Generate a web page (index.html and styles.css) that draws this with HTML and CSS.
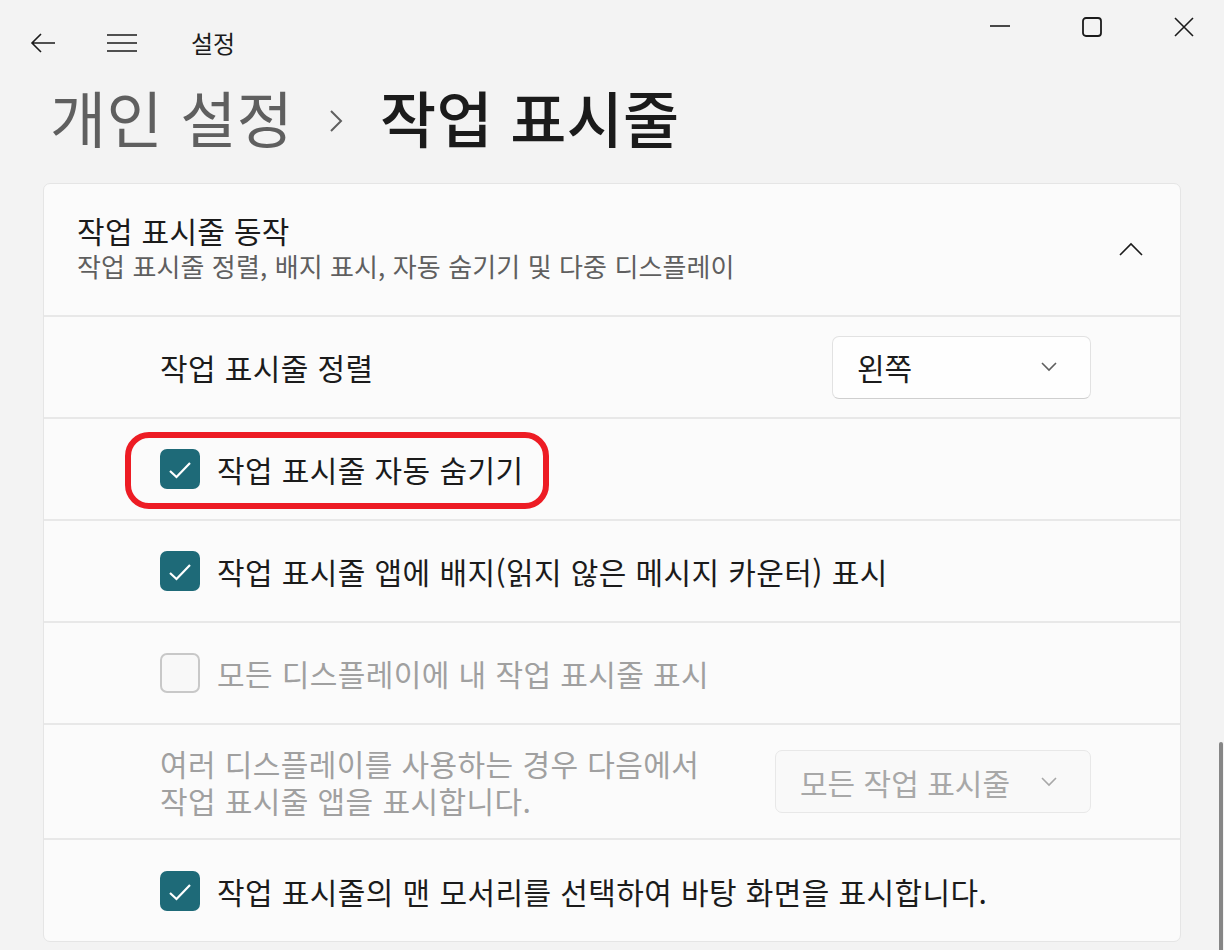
FILE: index.html
```html
<!DOCTYPE html>
<html lang="ko">
<head>
<meta charset="utf-8">
<link rel="stylesheet" href="styles.css">
</head>
<body>
<div class="window">
  <header class="titlebar">
    <div class="tb-left">
      <svg class="ico-back" width="26" height="20" viewBox="0 0 26 20"><path d="M11 1 L2 10 L11 19 M2 10 H25" fill="none" stroke="#1b1b1b" stroke-width="1.6"/></svg>
      <svg class="ico-menu" width="30" height="20" viewBox="0 0 30 20"><path d="M0 2 H30 M0 10 H30 M0 18 H30" fill="none" stroke="#1b1b1b" stroke-width="1.6"/></svg>
      <span class="app-title">설정</span>
    </div>
    <div class="tb-right">
      <svg width="20" height="20" viewBox="0 0 20 20"><path d="M0 9 H20" stroke="#1b1b1b" stroke-width="1.6"/></svg>
      <svg width="20" height="20" viewBox="0 0 20 20"><rect x="1" y="1" width="18" height="18" rx="3" fill="none" stroke="#1b1b1b" stroke-width="1.8"/></svg>
      <svg width="20" height="20" viewBox="0 0 20 20"><path d="M1 1 L19 19 M19 1 L1 19" stroke="#1b1b1b" stroke-width="1.6"/></svg>
    </div>
  </header>

  <h1 class="breadcrumb"><span class="crumb-parent">개인 설정</span><svg class="crumb-sep" width="14" height="22" viewBox="0 0 14 22"><path d="M2 1 L12 11 L2 21" fill="none" stroke="#5f5f5f" stroke-width="2"/></svg><span class="crumb-current">작업 표시줄</span></h1>

  <section class="card">
    <div class="card-head">
      <div class="head-text">
        <div class="head-title">작업 표시줄 동작</div>
        <div class="head-sub">작업 표시줄 정렬, 배지 표시, 자동 숨기기 및 다중 디스플레이</div>
      </div>
      <svg class="chev-up" width="24" height="14" viewBox="0 0 24 14"><path d="M1 13 L12 2 L23 13" fill="none" stroke="#1b1b1b" stroke-width="1.6"/></svg>
    </div>

    <div class="row">
      <span class="label">작업 표시줄 정렬</span>
      <div class="select">
        <span>왼쪽</span>
        <svg width="16" height="10" viewBox="0 0 16 10"><path d="M1 1 L8 8 L15 1" fill="none" stroke="#5f5f5f" stroke-width="1.6"/></svg>
      </div>
    </div>

    <div class="row">
      <label class="check-item">
        <span class="box checked"><svg width="40" height="40" viewBox="0 0 40 40"><path d="M10 22 L16.5 28 L30 14" fill="none" stroke="#ffffff" stroke-width="2.2"/></svg></span>
        <span class="label">작업 표시줄 자동 숨기기</span>
      </label>
    </div>

    <div class="row">
      <label class="check-item">
        <span class="box checked"><svg width="40" height="40" viewBox="0 0 40 40"><path d="M10 22 L16.5 28 L30 14" fill="none" stroke="#ffffff" stroke-width="2.2"/></svg></span>
        <span class="label">작업 표시줄 앱에 배지(읽지 않은 메시지 카운터) 표시</span>
      </label>
    </div>

    <div class="row">
      <label class="check-item disabled">
        <span class="box empty"></span>
        <span class="label">모든 디스플레이에 내 작업 표시줄 표시</span>
      </label>
    </div>

    <div class="row row-tall">
      <div class="multi">
        <div class="label disabled-text">여러 디스플레이를 사용하는 경우 다음에서</div>
        <div class="label disabled-text">작업 표시줄 앱을 표시합니다.</div>
      </div>
      <div class="select select-wide select-disabled">
        <span>모든 작업 표시줄</span>
        <svg width="16" height="10" viewBox="0 0 16 10"><path d="M1 1 L8 8 L15 1" fill="none" stroke="#a8a8a8" stroke-width="1.6"/></svg>
      </div>
    </div>

    <div class="row row-last">
      <label class="check-item">
        <span class="box checked"><svg width="40" height="40" viewBox="0 0 40 40"><path d="M10 22 L16.5 28 L30 14" fill="none" stroke="#ffffff" stroke-width="2.2"/></svg></span>
        <span class="label">작업 표시줄의 맨 모서리를 선택하여 바탕 화면을 표시합니다.</span>
      </label>
    </div>
  </section>

  <div class="highlight"></div>
  <div class="scrollbar"></div>
</div>
</body>
</html>
```

FILE: styles.css
```css
* { box-sizing: border-box; }
html, body { margin: 0; padding: 0; }
body {
  background: #f3f3f3;
  font-family: "Noto Sans CJK KR", "Noto Sans", sans-serif;
  color: #1b1b1b;
  width: 1224px;
  height: 950px;
  overflow: hidden;
}
.window { position: relative; width: 1224px; height: 950px; }

.titlebar {
  height: 86px;
  display: flex;
  justify-content: space-between;
  align-items: flex-start;
}
.tb-left {
  display: flex;
  align-items: center;
  height: 86px;
  padding-left: 30px;
}
.ico-menu { margin-left: 51px; }
.app-title {
  margin-left: 54px;
  font-size: 24px;
  line-height: 1;
}
.tb-right {
  display: flex;
  gap: 72px;
  padding-top: 17px;
  padding-right: 30px;
}

.breadcrumb {
  margin: 0;
  padding-left: 50px;
  height: 97px;
  display: flex;
  align-items: center;
  font-weight: 400;
  font-size: 61px;
  line-height: 1;
  margin-top: -18px;
  letter-spacing: 0.3px;
}
.crumb-parent { color: #5f5f5f; }
.crumb-sep { margin: 8px 37px 0 36px; }
.crumb-current { color: #1b1b1b; font-weight: 500; }

.card {
  margin-left: 43px;
  margin-top: 18px;
  width: 1138px;
  background: #fbfbfb;
  border: 1px solid #e5e5e5;
  border-radius: 7px;
}
.card-head {
  height: 133px;
  display: flex;
  align-items: center;
  justify-content: space-between;
  padding: 0 37px 0 33px;
  border-bottom: 2px solid #e8e8e8;
}
.head-text { margin-top: -6px; display: flex; flex-direction: column; gap: 0; }
.head-title { font-size: 30px; line-height: 38px; letter-spacing: 0.3px; }
.head-sub { font-size: 26px; line-height: 34px; color: #5f5f5f; letter-spacing: 0.1px; }
.chev-up { margin-top: -2px; }

.row {
  height: 102px;
  display: flex;
  align-items: center;
  justify-content: space-between;
  padding: 0 89px 0 116px;
  border-bottom: 2px solid #e8e8e8;
}
.row-tall { height: 115px; }
.row-last { border-bottom: none; height: 101px; }

.label { font-size: 30px; line-height: 38px; letter-spacing: 0.4px; }
.multi { display: flex; flex-direction: column; }
.multi .label { line-height: 37px; }
.disabled-text { color: #a0a0a0; }

.select {
  width: 259px;
  height: 63px;
  background: #fefefe;
  border: 1.5px solid #e2e2e2;
  border-bottom-color: #cfcfcf;
  border-radius: 7px;
  display: flex;
  align-items: center;
  justify-content: space-between;
  padding: 0 33px 0 24px;
  font-size: 30px;
}
.select-wide { width: 316px; }
.select-disabled {
  color: #a8a8a8;
  background: #f9f9f9;
  border-color: #e8e8e8;
}

.check-item {
  display: flex;
  align-items: center;
  gap: 17px;
}
.box {
  width: 40px;
  height: 40px;
  border-radius: 7px;
  display: block;
  flex: none;
}
.box svg { display: block; }
.box.checked { background: #1e6a78; }
.box.empty { background: #f8f8f8; border: 2px solid #c8c8c8; }
.check-item.disabled .label { color: #a0a0a0; }

.highlight {
  position: absolute;
  left: 125px;
  top: 432px;
  width: 424px;
  height: 77px;
  border: 6px solid #ed1c24;
  border-radius: 24px;
}
.scrollbar {
  position: absolute;
  right: 1px;
  top: 742px;
  width: 4px;
  height: 210px;
  background: #868686;
  border-radius: 2px;
}
```
